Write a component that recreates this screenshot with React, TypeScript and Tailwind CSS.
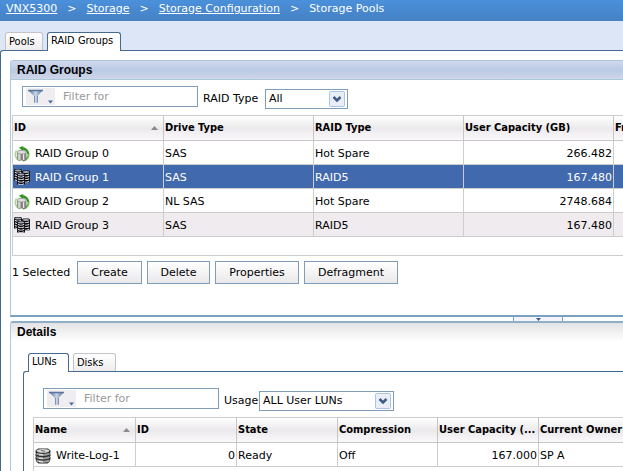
import { useState, type ReactNode } from 'react'
import clsx from 'clsx'

const raidGroups = [
  { id: 'RAID Group 0', drive: 'SAS', raid: 'Hot Spare', capacity: '266.482', spare: true },
  { id: 'RAID Group 1', drive: 'SAS', raid: 'RAID5', capacity: '167.480', spare: false },
  { id: 'RAID Group 2', drive: 'NL SAS', raid: 'Hot Spare', capacity: '2748.684', spare: true },
  { id: 'RAID Group 3', drive: 'SAS', raid: 'RAID5', capacity: '167.480', spare: false },
]

const actions = [
  { label: 'Create', width: 'w-[65px]' },
  { label: 'Delete', width: 'w-[63px]' },
  { label: 'Properties', width: 'w-[84px]' },
  { label: 'Defragment', width: 'w-[94px]' },
]

function HotSpareIcon() {
  return (
    <svg className="h-4 w-4 shrink-0" viewBox="0 0 16 16">
      <path d="M3.500 3.500C-.5 7 .5 13 5 14.800h3.500C13 14.500 15.500 11 14.800 7 14 4 11.500 2 8.500 2z" fill="#e3f2da" />
      <path d="M2.500 4.500C.3 8 1 12.500 5 14.500" fill="none" stroke="#a9d68f" strokeWidth="1.500" />
      <path d="M5 1.500 9.500 0 9 1.300c3.500.5 6 3.200 6.300 6.700h-2C13 5.500 11.500 4 9 3.800L8.700 5z" fill="#2f8f22" />
      <path d="M14.600 7.500c.2 3.500-2 6.300-5.600 7.300" fill="none" stroke="#6ab844" strokeWidth="1.800" />
      <path d="M3.500 6.500v7c1 1.200 3 1.200 4 .5V6.500z" fill="#b4b4b4" stroke="#757575" strokeWidth=".7" />
      <path d="M8 6.500V14c1.500.8 3.500.5 4-.5v-7z" fill="#9a9a9a" stroke="#666" strokeWidth=".7" />
      <path d="M5 7.500V14M9.500 7.500V14" stroke="#ececec" strokeWidth="1" />
      <ellipse cx="7.800" cy="6.200" rx="4.300" ry="1.900" fill="#dedede" stroke="#8b8b8b" strokeWidth=".7" />
    </svg>
  )
}

// One stack of platters, reused three times in the group icon
function DiskStack({ x, y, rows }: { x: number; y: number; rows: number[] }) {
  return (
    <g transform={`translate(${x} ${y})`}>
      <rect width="8" height={rows.length * 2.5 + 2} rx="1.500" fill="#101014" />
      <ellipse cx="4" cy="1.600" rx="3.200" ry="1" fill="#a9acb8" />
      {rows.map((r) => (
        <path key={r} d={`M1 ${r * 2.5 + 3.3}c1.500 1 4.500 1 6 0`} fill="none" stroke="#d3d5dd" strokeWidth="1.100" />
      ))}
    </g>
  )
}

function DiskGroupIcon() {
  return (
    <svg className="-mt-px h-4 w-4 shrink-0" viewBox="0 0 16 16">
      <DiskStack x={0} y={0} rows={[0, 1, 2, 3]} />
      <DiskStack x={8} y={1.5} rows={[0, 1, 2, 3]} />
      <DiskStack x={3} y={4} rows={[0, 1, 2, 3]} />
    </svg>
  )
}

function LunIcon() {
  return (
    <svg className="h-4 w-4 shrink-0" viewBox="0 0 16 16">
      <path
        d="M3 .5h10l2.500 2v2L15 5l.5 1v2l-.5.5.5 1v2l-.5.5v1.500l-2.500 2h-9L1 13.500V12l-.5-.5v-2l.5-1L.5 8V6L1 5 .5 4.500v-2z"
        fill="#2c2c2c"
      />
      <ellipse cx="8" cy="2.800" rx="6.500" ry="1.900" fill="#d6d6d6" />
      <path d="M6 2.300l4 1" stroke="#666" />
      <g fill="none" strokeWidth="2">
        <path d="M1.500 5.700c3 1.600 10 1.600 13 0M1.500 9.200c3 1.600 10 1.600 13 0M1.500 12.500c3 1.600 10 1.600 13 0" stroke="#9b9b9b" />
        <path d="M4 6.600l4 .3M4 10.100l4 .3M4 13.400l4 .3" stroke="#e4e4e4" strokeWidth="1.400" />
      </g>
    </svg>
  )
}

function SortArrow() {
  return (
    <svg className="h-1 w-[7px] shrink-0" viewBox="0 0 7 4">
      <path d="M3.500 0 7 4H0z" fill="#8a8a8a" />
    </svg>
  )
}

type TabProps = { active: boolean; width: string; onClick: () => void; children: ReactNode }

function Tab({ active, width, onClick, children }: TabProps) {
  return (
    <button
      type="button"
      role="tab"
      aria-selected={active}
      onClick={onClick}
      className={clsx(
        'relative rounded-t-[3px] border border-b-0 px-[3px] text-left font-["DejaVu_Sans_Condensed",sans-serif] text-[11px] leading-4',
        width,
        active ? 'z-10 -mb-px h-[19px] border-[#456c90] bg-white pb-[2px]' : 'h-[18px] border-[#c4c4c8] bg-linear-to-b from-white to-[#eeecee]',
      )}
    >
      {children}
    </button>
  )
}

function FilterBox({ label }: { label: string }) {
  return (
    <div className="flex h-[21px] w-44 items-center border border-[#7f9db9] bg-white pl-[3px]">
      <button type="button" aria-label="Filter options" className="h-[17px] w-[29px] shrink-0 bg-[#efedf0]">
        <svg className="h-[17px] w-[29px]" viewBox="0 0 29 17">
          <defs>
            <linearGradient id="funnel" x1="0" x2="1">
              <stop offset="0" stopColor="#48638f" />
              <stop offset=".5" stopColor="#c9d6ea" />
              <stop offset="1" stopColor="#526e9b" />
            </linearGradient>
          </defs>
          <path d="M2.500 2.500h14l-5 5.500v7h-3.500V8z" fill="url(#funnel)" />
          <path d="M2 2.500h15" stroke="#5a769f" strokeWidth="1.500" />
          <path d="M8.500 8v6.500M11.500 8v6.500" stroke="#7c93b4" />
          <path d="M22 12.500h5l-2.500 3z" fill="#456c9c" />
        </svg>
      </button>
      <input
        type="text"
        aria-label={label}
        placeholder="Filter for"
        className="ml-2 w-full min-w-0 bg-transparent text-[11px] outline-none placeholder:text-[#9a9a9a]"
      />
    </div>
  )
}

type SelectProps = { id: string; label: string; options: string[]; labelWidth: string; width: string }

function SelectBox({ id, label, options, labelWidth, width }: SelectProps) {
  return (
    <div className="mt-[3px] flex items-center">
      <label htmlFor={id} className={clsx('whitespace-nowrap', labelWidth)}>
        {label}
      </label>
      <div className={clsx('relative', width)}>
        <select id={id} className="h-5 w-full appearance-none border border-[#7f9db9] bg-white pl-[3px] text-[11px] outline-none">
          {options.map((o) => (
            <option key={o}>{o}</option>
          ))}
        </select>
        <svg className="pointer-events-none absolute top-[2px] right-[3px] h-4 w-4" viewBox="0 0 16 16">
          <rect x=".5" y=".5" width="15" height="15" rx="1" fill="#e9edf6" stroke="#a9c5e3" />
          <path d="M4.500 6 8 9.500 11.500 6" fill="none" stroke="#3f5c88" strokeWidth="2.500" />
        </svg>
      </div>
    </div>
  )
}

function HeadCell({ children, sorted, width }: { children: ReactNode; sorted?: boolean; width?: string }) {
  return (
    <th className={clsx('border-r border-b border-[#c6c6c6] p-0', width)}>
      <div className="flex items-center justify-between pr-[5px] pl-px text-left font-['DejaVu_Sans_Condensed',sans-serif] font-bold whitespace-nowrap">
        <span>{children}</span>
        {sorted && <SortArrow />}
      </div>
    </th>
  )
}

const headRow = 'h-[25px] bg-linear-to-b from-white via-[#ebe9eb] to-[#fcfafc]'
const cell = 'border-r border-b border-[#cdcdcd] pt-[2px] pr-px pb-0 pl-px'

export default function App() {
  const [tab, setTab] = useState('RAID Groups')
  const [detailTab, setDetailTab] = useState('LUNs')
  const [selected, setSelected] = useState('RAID Group 1')

  return (
    <div className="flex h-screen flex-col overflow-hidden bg-[#dde6f6] font-['DejaVu_Sans',sans-serif] text-[11px] leading-4 text-black">
      <nav className="flex h-[21px] shrink-0 items-start gap-[10px] bg-linear-to-b from-[#4a90da] to-[#4681c4] pt-px pl-[6px] whitespace-nowrap text-white">
        <a href="#system" className="underline">VNX5300</a>
        <span>&gt;</span>
        <a href="#storage" className="underline">Storage</a>
        <span>&gt;</span>
        <a href="#configuration" className="underline">Storage Configuration</a>
        <span>&gt;</span>
        <span>Storage Pools</span>
      </nav>

      <div role="tablist" className="flex shrink-0 items-end gap-1 pt-[11px] pl-[5px]">
        <Tab width="w-[38px]" active={tab === 'Pools'} onClick={() => setTab('Pools')}>
          Pools
        </Tab>
        <Tab width="w-[74px]" active={tab === 'RAID Groups'} onClick={() => setTab('RAID Groups')}>
          RAID Groups
        </Tab>
      </div>

      <main className="flex min-h-0 flex-1 flex-col rounded-tl-[3px] border-t border-l border-[#456c90] bg-white pt-[9px] pl-[9px]">
        {/* RAID groups */}
        <section className="shrink-0 rounded-tl-[3px] border-b-2 border-l border-b-[#7ba1c2] border-l-[#a9cbdc]">
          <h2 className="h-5 rounded-tl-[3px] border-y border-[#a9c9d6] bg-linear-to-b from-[#d3d9ea] via-[#b9cae6] to-[#cfd6e7] pl-[6px] font-['Liberation_Sans',sans-serif] text-[12px] leading-[18px] font-bold">
            RAID Groups
          </h2>
          <div className="flex items-start gap-[5px] pt-[6px] pl-[11px]">
            <FilterBox label="Filter RAID groups" />
            <SelectBox id="raid-type" label="RAID Type" options={['All', 'RAID5', 'Hot Spare']} labelWidth="w-[62px]" width="w-[83px]" />
          </div>

          <div className="mt-[6px] ml-px h-[141px] overflow-hidden border-y border-l border-[#cdcdcd]">
            <table className="w-full table-fixed border-separate border-spacing-0">
              <thead>
                <tr className={headRow}>
                  <HeadCell width="w-[151px]" sorted>ID</HeadCell>
                  <HeadCell width="w-[150px]">Drive Type</HeadCell>
                  <HeadCell width="w-[150px]">RAID Type</HeadCell>
                  <HeadCell width="w-[150px]">User Capacity (GB)</HeadCell>
                  <th className="border-b border-[#c6c6c6] p-0 pl-px text-left font-['DejaVu_Sans_Condensed',sans-serif] whitespace-nowrap">
                    Fr
                  </th>
                </tr>
              </thead>
              <tbody>
                {raidGroups.map((g, i) => (
                  <tr
                    key={g.id}
                    onClick={() => setSelected(g.id)}
                    className={clsx('h-6', selected === g.id ? 'bg-[#4169ae] text-white' : i === 3 && 'bg-[#efebee]')}
                  >
                    <td className={cell}>
                      <div className="flex items-center gap-[5px]">
                        {g.spare ? <HotSpareIcon /> : <DiskGroupIcon />}
                        {g.id}
                      </div>
                    </td>
                    <td className={cell}>{g.drive}</td>
                    <td className={cell}>{g.raid}</td>
                    <td className={clsx(cell, 'text-right')}>{g.capacity}</td>
                    <td className="border-b border-[#cdcdcd] p-0" />
                  </tr>
                ))}
              </tbody>
            </table>
          </div>

          <div className="flex items-center gap-[5px] pt-[5px] pb-[31px] pl-px">
            <span className="w-[60px] whitespace-nowrap">1 Selected</span>
            {actions.map((a) => (
              <button
                key={a.label}
                type="button"
                className={clsx('h-[23px] shrink-0 border border-[#7f9db9] bg-linear-to-b from-white to-[#eae8ea]', a.width)}
              >
                {a.label}
              </button>
            ))}
          </div>
        </section>

        {/* Splitter */}
        <div className="flex h-1 shrink-0 justify-end pr-[60px]">
          <button type="button" aria-label="Collapse details" className="flex w-[50px] justify-center border-x border-[#7ba1c2] bg-[#f6f4f8]">
            <svg className="h-1 w-[5px]" viewBox="0 0 5 4">
              <path d="M0 1h5L2.500 4z" fill="#3f5c88" />
            </svg>
          </button>
        </div>

        {/* Details */}
        <section className="flex min-h-0 flex-1 flex-col rounded-tl-[3px] border-t-2 border-l border-t-[#8db0c8] border-l-[#a9cbdc]">
          <h2 className="h-[18px] shrink-0 bg-linear-to-b from-[#e3e2e4] to-white pl-[6px] font-['Liberation_Sans',sans-serif] text-[12px] leading-[18px] font-bold">
            Details
          </h2>
          <div role="tablist" className="flex shrink-0 items-end gap-1 pt-3 pl-[17px]">
            <Tab width="w-[41px]" active={detailTab === 'LUNs'} onClick={() => setDetailTab('LUNs')}>
              LUNs
            </Tab>
            <Tab width="w-[43px]" active={detailTab === 'Disks'} onClick={() => setDetailTab('Disks')}>
              Disks
            </Tab>
          </div>
          <div className="ml-3 min-h-0 flex-1 overflow-hidden rounded-tl-[3px] border-t border-l border-[#456c90] pt-4 pl-[9px]">
            <div className="flex items-start gap-[5px] pl-[10px]">
              <FilterBox label="Filter LUNs" />
              <SelectBox id="usage" label="Usage" options={['ALL User LUNs', 'Private LUNs']} labelWidth="w-[35px]" width="w-[135px]" />
            </div>
            <div className="mt-[6px] h-24 border-t border-l border-[#cdcdcd]">
              <table className="w-full table-fixed border-separate border-spacing-0">
                <thead>
                  <tr className={headRow}>
                    <HeadCell width="w-[102px]" sorted>Name</HeadCell>
                    <HeadCell width="w-[101px]">ID</HeadCell>
                    <HeadCell width="w-[101px]">State</HeadCell>
                    <HeadCell width="w-[100px]">Compression</HeadCell>
                    <HeadCell width="w-[101px]">User Capacity (...</HeadCell>
                    <th className="border-b border-[#c6c6c6] p-0 pl-px text-left font-['DejaVu_Sans_Condensed',sans-serif] whitespace-nowrap">
                      Current Owner
                    </th>
                  </tr>
                </thead>
                <tbody>
                  <tr className="h-6">
                    <td className={cell}>
                      <div className="flex items-center gap-[5px]">
                        <LunIcon />
                        Write-Log-1
                      </div>
                    </td>
                    <td className={clsx(cell, 'text-right')}>0</td>
                    <td className={cell}>Ready</td>
                    <td className={cell}>Off</td>
                    <td className={clsx(cell, 'text-right')}>167.000</td>
                    <td className="border-b border-[#cdcdcd] p-0 pt-[2px] pl-px">SP A</td>
                  </tr>
                </tbody>
              </table>
            </div>
          </div>
        </section>
      </main>
    </div>
  )
}
